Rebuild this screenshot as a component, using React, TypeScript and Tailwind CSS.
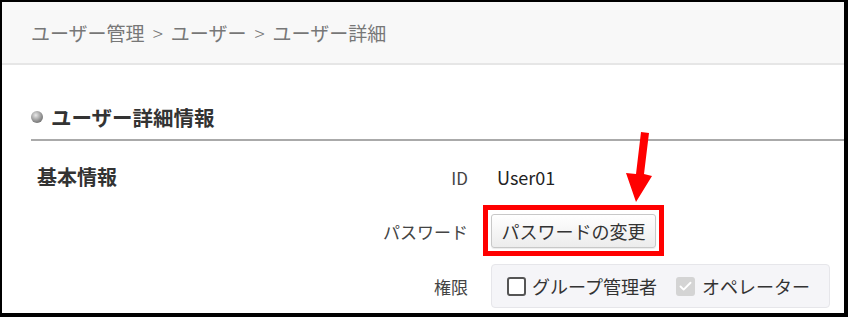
import { Check } from 'lucide-react'

const font = { fontFamily: '"Noto Sans CJK JP", "Noto Sans", sans-serif' }

function Bullet() {
  return (
    <span className="inline-block h-[12px] w-[12px] rounded-full bg-[radial-gradient(circle_at_40%_35%,#e8e8e8,#8a8a8a_60%,#555)]" />
  )
}

function Arrow() {
  return (
    <svg
      className="pointer-events-none absolute left-0 top-0"
      width="848"
      height="317"
      viewBox="0 0 848 317"
    >
      <polygon
        points="639,130 647,131 642,172 650,174 634,200 624,171 634,172"
        fill="#ff0000"
      />
    </svg>
  )
}

export default function App() {
  return (
    <div
      className="relative h-[317px] w-[848px] overflow-hidden border-b-4 border-l-2 border-r-4 border-t-2 border-black bg-white text-[#333]"
      style={font}
    >
      {/* Breadcrumb */}
      <div className="flex h-[63px] items-center border-b-2 border-[#e6e6e6] bg-[#f8f8f8] pl-[29px] text-[19px] leading-none text-[#777]">
        <span>ユーザー管理</span>
        <span className="mx-[8px] text-[19px] font-light">&gt;</span>
        <span>ユーザー</span>
        <span className="mx-[8px] text-[19px] font-light">&gt;</span>
        <span>ユーザー詳細</span>
      </div>

      {/* Section title */}
      <div className="pl-[29px] pt-[38px]">
        <div className="flex items-center gap-[8px] border-b-2 border-[#aaa] pb-[8px]">
          <Bullet />
          <h2 className="text-[20.5px] font-bold leading-[28px] text-[#333]">ユーザー詳細情報</h2>
        </div>
      </div>

      {/* Body */}
      <div className="flex pl-[35px] pt-[18px]">
        <div className="w-[331px]">
          <div className="flex h-[36px] items-center text-[20px] font-bold leading-none">基本情報</div>
        </div>
        <div className="flex flex-col">
          <div className="flex h-[36px] items-center">
            <div className="w-[100px] text-right text-[17px] leading-none text-[#444]">ID</div>
            <div className="pl-[29px] text-[18px] leading-none text-[#222]">User01</div>
          </div>

          <div className="mt-[19px] flex h-[34px] items-center">
            <div className="w-[100px] text-right text-[17px] leading-none text-[#444]">パスワード</div>
            <div className="relative ml-[23px]">
              <button className="flex h-[34px] w-[165px] items-center justify-center rounded-[3px] border border-[#c8c8c8] bg-[linear-gradient(#ffffff,#ececec)] text-[18px] leading-none text-[#333] shadow-[0_1px_1px_rgba(0,0,0,0.08)]">
                パスワードの変更
              </button>
              <div className="pointer-events-none absolute -bottom-[8px] -left-[8px] -right-[8px] -top-[9px] border-[5px] border-[#ff0000]" />
            </div>
          </div>

          <div className="mt-[16px] flex h-[44px] items-center">
            <div className="w-[100px] text-right text-[17px] leading-none text-[#444]">権限</div>
            <div className="ml-[23px] flex h-[44px] w-[339px] items-center rounded-[4px] border border-[#e6e6ea] bg-[#f5f5f8] pl-[15px]">
              <span className="h-[19px] w-[19px] rounded-[3px] border-2 border-[#555] bg-white" />
              <span className="ml-[6px] text-[18px] leading-none text-[#333]">グループ管理者</span>
              <span className="ml-[19px] flex h-[19px] w-[19px] items-center justify-center rounded-[3px] bg-[#d4d4d4]">
                <Check className="h-[15px] w-[15px] text-white" strokeWidth={3} />
              </span>
              <span className="ml-[7px] text-[18px] leading-none text-[#333]">オペレーター</span>
            </div>
          </div>
        </div>
      </div>

      <Arrow />
    </div>
  )
}
